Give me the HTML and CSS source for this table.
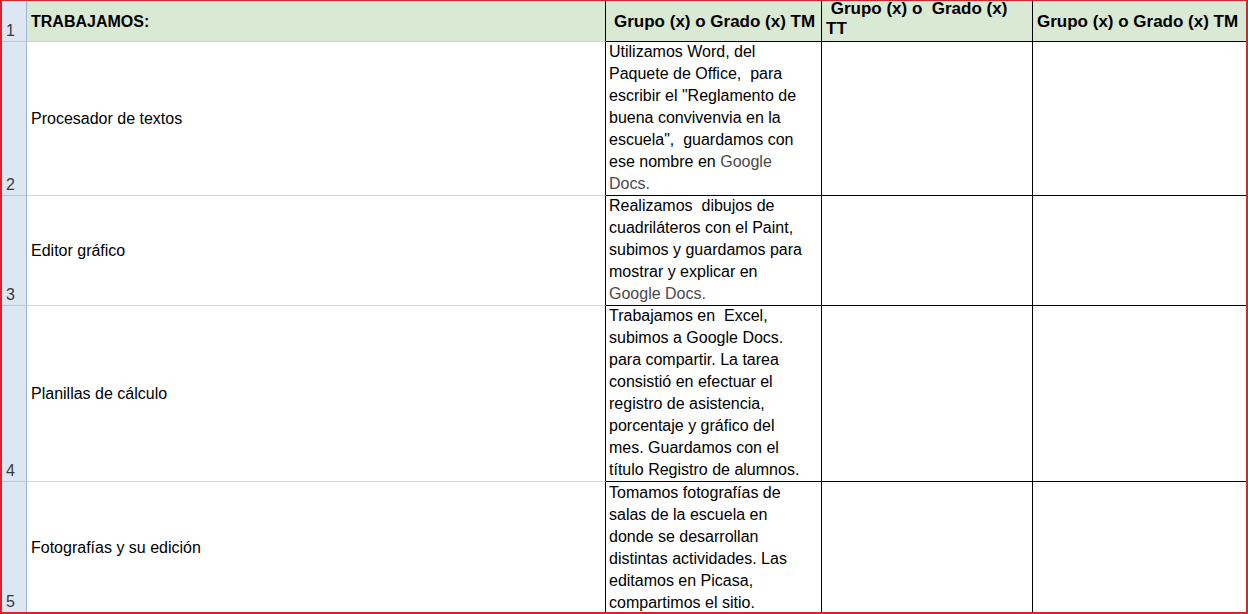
FILE: index.html
```html
<!DOCTYPE html>
<html>
<head>
<meta charset="utf-8">
<link rel="stylesheet" href="styles.css">
</head>
<body>
<div class="sheet">
  <div class="rh">1</div>
  <div class="c a hd"><span class="title">TRABAJAMOS:</span></div>
  <div class="c b hd hcell"><span>Grupo (x) o Grado (x) TM</span></div>
  <div class="c b hd hcell two"><span> Grupo (x) o&nbsp; Grado (x) TT</span></div>
  <div class="c b hd hcell last"><span>Grupo (x) o Grado (x) TM</span></div>

  <div class="rh">2</div>
  <div class="c a mid"><span>Procesador de textos</span></div>
  <div class="c b txt"><div class="para">Utilizamos Word, del Paquete de Office,&nbsp; para escribir el "Reglamento de buena convivenvia en la escuela",&nbsp; guardamos con ese nombre en <span class="gray">Google Docs.</span></div></div>
  <div class="c b"></div>
  <div class="c b last"></div>

  <div class="rh">3</div>
  <div class="c a mid"><span>Editor gráfico</span></div>
  <div class="c b txt"><div class="para">Realizamos&nbsp; dibujos de cuadriláteros con el Paint, subimos y guardamos para mostrar y explicar en <span class="gray">Google Docs.</span></div></div>
  <div class="c b"></div>
  <div class="c b last"></div>

  <div class="rh">4</div>
  <div class="c a mid"><span>Planillas de cálculo</span></div>
  <div class="c b txt"><div class="para">Trabajamos en&nbsp; Excel, subimos a Google Docs. para compartir. La tarea consistió en efectuar el registro de asistencia, porcentaje y gráfico del mes. Guardamos con el título Registro de alumnos.</div></div>
  <div class="c b"></div>
  <div class="c b last"></div>

  <div class="rh lastrow">5</div>
  <div class="c a mid lastrow"><span>Fotografías y su edición</span></div>
  <div class="c b txt lastrow top"><div class="para">Tomamos fotografías de salas de la escuela en donde se desarrollan distintas actividades. Las editamos en Picasa, compartimos el sitio.</div></div>
  <div class="c b lastrow"></div>
  <div class="c b last lastrow"></div>
</div>
</body>
</html>
```

FILE: styles.css
```css
* { box-sizing: border-box; }
html, body { margin: 0; padding: 0; background: #fff; }
body { font-family: "Liberation Sans", Arial, sans-serif; font-size: 16px; color: #000; }

.sheet {
  width: 1248px;
  height: 614px;
  border: 2px solid #d9222a;
  border-top-width: 1px;
  display: grid;
  grid-template-columns: 25px 579px 216px 211px 1fr;
  grid-template-rows: 41px 154px 110px 176px 1fr;
  overflow: hidden;
}

.rh {
  background: #dde7f3;
  border-right: 1px solid #9fb6cf;
  border-bottom: 1px solid #b9c8da;
  color: #3a3a3a;
  font-size: 16px;
  line-height: 18px;
  padding-left: 4px;
  display: flex;
  align-items: flex-end;
  padding-bottom: 1px;
}

.c {
  border-bottom: 1px solid #000;
  border-right: 1px solid #000;
  overflow: hidden;
}
.a {
  border-bottom-color: #d4d4d4;
  padding-left: 4px;
}
.last { border-right: none; }
.lastrow { border-bottom: none; }

.hd {
  background: #d9e9d3;
  display: flex;
  align-items: center;
}
.a.hd { border-bottom-color: #c9d6c4; }
.title { font-weight: bold; font-size: 16px; padding-top: 2px; }
.hcell {
  font-weight: bold;
  font-size: 17px;
  line-height: 20px;
  padding-left: 8px;
  padding-top: 2px;
}
.hcell.two {
  white-space: pre-wrap;
  align-items: flex-start;
  padding-left: 4px;
  padding-top: 0;
  margin-top: -2px;
  padding-right: 20px;
}
.hcell.last { padding-left: 4px; }

.mid {
  display: flex;
  align-items: center;
  padding-top: 1px;
}

.txt {
  line-height: 22px;
  padding-left: 3px;
  padding-right: 13px;
  display: flex;
  align-items: flex-end;
}
.txt.top { align-items: flex-start; }
.para { width: 100%; }
.gray { color: #4a4a4a; }
```
